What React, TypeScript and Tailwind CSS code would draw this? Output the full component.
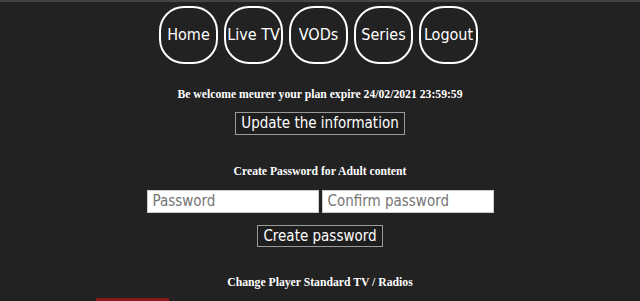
import React from "react";

const navItems = ["Home", "Live TV", "VODs", "Series", "Logout"];

export default function App() {
  return (
    <div className="w-[640px] h-[301px] overflow-hidden bg-[#222222] border-t-2 border-[#444444] flex flex-col items-center">
      <nav className="flex gap-[6px] mt-[4px] mr-[3px]">
        {navItems.map((item) => (
          <div
            key={item}
            className="w-[59px] h-[58px] rounded-[25px] border-2 border-white flex items-center justify-center text-white text-[16px] whitespace-nowrap font-['DejaVu_Sans_Condensed','DejaVu_Sans',sans-serif]"
          >
            {item}
          </div>
        ))}
      </nav>
      <p className="mt-[24px] text-white font-bold text-[11.7px] leading-[14px] font-['Liberation_Serif',serif]">
        Be welcome meurer your plan expire 24/02/2021 23:59:59
      </p>
      <button className="mt-[10px] h-[23px] px-[5px] border border-[#9a9a9a] bg-[#1e1e1e] text-white text-[15px] leading-[20px] font-['DejaVu_Sans_Condensed','DejaVu_Sans',sans-serif]">
        Update the information
      </button>
      <p className="mt-[30px] text-white font-bold text-[11.7px] leading-[14px] font-['Liberation_Serif',serif]">
        Create Password for Adult content
      </p>
      <div className="mt-[11px] flex gap-[3px]">
        <input
          type="password"
          placeholder="Password"
          className="w-[172px] h-[23px] bg-white border border-[#cccccc] px-[5px] text-[15px] placeholder:text-[#757575] outline-none font-['DejaVu_Sans_Condensed','DejaVu_Sans',sans-serif]"
        />
        <input
          type="password"
          placeholder="Confirm password"
          className="w-[172px] h-[23px] bg-white border border-[#cccccc] px-[5px] text-[15px] placeholder:text-[#757575] outline-none font-['DejaVu_Sans_Condensed','DejaVu_Sans',sans-serif]"
        />
      </div>
      <button className="mt-[12px] h-[23px] px-[5px] border border-[#9a9a9a] bg-[#1e1e1e] text-white text-[15px] leading-[20px] font-['DejaVu_Sans_Condensed','DejaVu_Sans',sans-serif]">
        Create password
      </button>
      <p className="mt-[29px] text-white font-bold text-[11.7px] leading-[14px] font-['Liberation_Serif',serif]">
        Change Player Standard TV / Radios
      </p>
      <div className="self-start ml-[96px] mt-[8px] w-[73px] h-[3px] bg-[#8b1a1a]" />
    </div>
  );
}
